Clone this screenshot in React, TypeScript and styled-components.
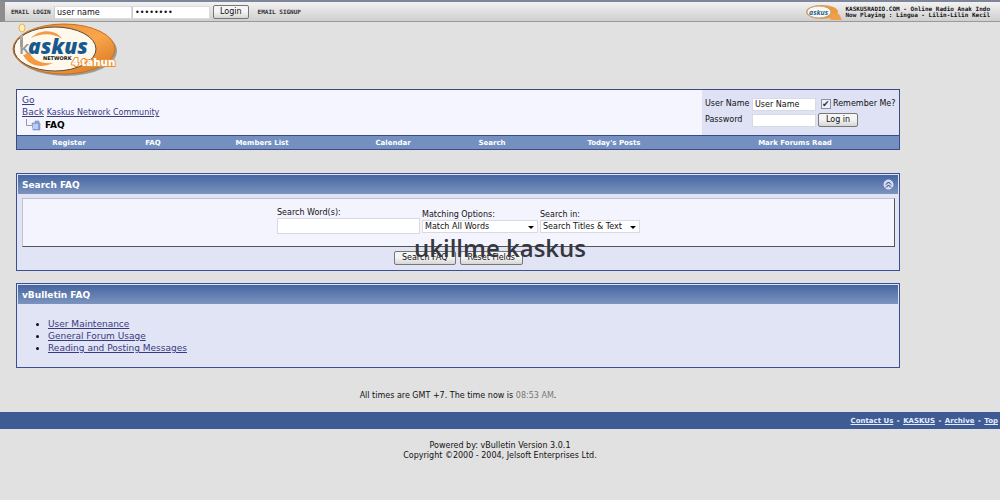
import React from 'react';
import styled, { createGlobalStyle } from 'styled-components';

const Global = createGlobalStyle`
  * { box-sizing: border-box; }
  body {
    margin: 0;
    background: #e1e1e1;
    color: #111;
    font: 8px/10px "DejaVu Sans", Verdana, sans-serif;
  }
  a { color: #3a3a80; }
  input, button, select { font: inherit; color: #111; margin: 0; }
`;

const Page = styled.div`
  position: relative;
`;

const TopBar = styled.header`
  display: flex;
  align-items: center;
  height: 22px;
  padding: 2px 0 1px 6px;
  border-top: 2px solid #7d8799;
  border-bottom: 1px solid #9a9a9a;
  border-left: 5px solid #8d8d8d;
  background: linear-gradient(#f2f2f2, #cfcfcf);
`;

const PixelLabel = styled.label`
  width: 43px;
  font: bold 6px/10px "DejaVu Sans Mono", monospace;
  white-space: nowrap;
  color: #333;
`;

const SignupLink = styled.a`
  margin-left: 9px;
  font: bold 6px/10px "DejaVu Sans Mono", monospace;
  color: #333;
  text-decoration: none;
`;

const TopInput = styled.input`
  width: 78px;
  height: 13px;
  padding: 0 2px;
  border: 1px solid #dcdcdc;
  border-left-color: #ccc;
  background: #fff;
`;

const Button = styled.button`
  height: 14px;
  padding: 0 7px;
  border: 1px solid #777;
  border-radius: 2px;
  background: linear-gradient(#f5f5f5 45%, #d6d6d6);
  line-height: 12px;
  white-space: nowrap;
`;

const TopButton = styled(Button)`
  margin-left: 3px;
  padding: 0 6px;
`;

const Radio = styled.div`
  display: flex;
  align-items: center;
  gap: 4px;
  margin-left: auto;
  padding-right: 10px;
  font: bold 6px/6px "DejaVu Sans Mono", monospace;
  white-space: nowrap;
`;

const LogoRow = styled.div`
  height: 67px;
  padding-left: 10px;
`;

const Main = styled.main`
  padding: 0 10% 0 16px;
`;

const Crumbs = styled.section`
  border: 1px solid #3c4a86;
  background: #f5f5ff;
`;

const CrumbTop = styled.div`
  display: flex;
  justify-content: space-between;
  height: 46px;
  border-bottom: 1px solid #3c4a86;
`;

const CrumbPath = styled.div`
  padding: 4px 0 0 5px;
  font-size: 9px;
  line-height: 12px;
`;

const SmallLink = styled.a`
  font-size: 8px;
`;

const Current = styled.div`
  display: flex;
  align-items: center;
  gap: 4px;
  padding-left: 3px;
  color: #000;
  font-weight: bold;
`;

const LoginForm = styled.form`
  display: grid;
  grid-template-columns: 45px 64px 80px;
  grid-auto-rows: 14px;
  align-content: start;
  align-items: center;
  gap: 2px;
  padding: 7px 1px 0 3px;
  background: #dfe2f4;
  white-space: nowrap;
`;

const Field = styled.input`
  width: 100%;
  height: 13px;
  padding: 0 2px;
  border: 1px solid #d9d9e4;
  background: #fff;
`;

const Remember = styled.label`
  display: flex;
  align-items: center;
  gap: 2px;
  padding-left: 3px;
`;

const Check = styled.input`
  appearance: none;
  width: 10px;
  height: 10px;
  border: 1px solid #8b93a3;
  background: #eef0f6;
  &:checked::after {
    content: "✔";
    display: block;
    font: 9px/8px "DejaVu Sans", sans-serif;
    color: #27304f;
  }
`;

const Nav = styled.nav`
  display: grid;
  grid-template-columns: 104fr 64fr 154fr 108fr 90fr 154fr 208fr;
  height: 13px;
  background: #7390c1;
  text-align: center;
`;

const NavLink = styled.a`
  color: #fff;
  font-weight: bold;
  font-size: 7px;
  line-height: 14px;
  text-decoration: none;
`;

const Panel = styled.section<{ $top: number }>`
  margin-top: ${(p) => p.$top}px;
  padding: 1px;
  border: 1px solid #3d4f93;
  background: #e0e4f5;
`;

const PanelHead = styled.h2`
  display: flex;
  align-items: center;
  justify-content: space-between;
  height: 19px;
  margin: 0;
  padding: 0 4px;
  background: linear-gradient(#4666a2, #7c94be);
  color: #fff;
  font-size: 9px;
  line-height: 12px;
`;

const Collapse = styled.button`
  display: flex;
  padding: 0;
  border: 0;
  background: none;
`;

const SearchForm = styled.form`
  padding: 4px 3px 4px 4px;
`;

const SearchBox = styled.div`
  display: flex;
  align-items: flex-end;
  justify-content: center;
  gap: 2px;
  height: 49px;
  padding: 0 0 12px;
  border: 1px solid #bfc1cc;
  border-right-color: #555;
  border-bottom-color: #555;
  background: #f4f4ff;
`;

const Option = styled.label<{ $width: number }>`
  display: flex;
  flex-direction: column;
  width: ${(p) => p.$width}px;
`;

const SearchInput = styled(Field)`
  height: 16px;
`;

const SelectWrap = styled.span`
  display: flex;
  position: relative;
  padding-bottom: 1px;
  &::after {
    content: "";
    position: absolute;
    right: 4px;
    top: 6px;
    border: 3px solid transparent;
    border-top-color: #000;
    border-bottom: 0;
    pointer-events: none;
  }
`;

const Select = styled.select`
  appearance: none;
  width: 100%;
  height: 13px;
  padding: 0 2px;
  border: 1px solid #d9d9e4;
  border-radius: 0;
  background: #fff;
`;

const Actions = styled.div`
  display: flex;
  justify-content: center;
  gap: 4px;
  padding-top: 4px;
`;

const Topics = styled.ul`
  margin: 0;
  padding: 14px 0 12px 30px;
  font-size: 9px;
  line-height: 12px;
`;

const Times = styled.p`
  margin: 23px 0 11px;
  text-align: center;
  time { color: #777; }
`;

const FooterBar = styled.nav`
  height: 17px;
  padding-right: 1px;
  background: #3e5c93;
  color: #fff;
  font-weight: bold;
  font-size: 7px;
  line-height: 18px;
  text-align: right;
  a {
    margin: 0 1px;
    color: #e4edff;
  }
`;

const Copyright = styled.footer`
  margin-top: 12px;
  text-align: center;
`;

const Watermark = styled.div`
  position: absolute;
  top: 232px;
  left: 50%;
  transform: translateX(-50%);
  color: #35373d;
  font: 600 24px/32px "Open Sans", "Noto Sans", sans-serif;
  white-space: nowrap;
  pointer-events: none;
`;

function Logo() {
  return (
    <svg width="108" height="56" viewBox="0 0 108 56" role="img" aria-label="Kaskus Network, 4 tahun">
      <defs>
        <linearGradient id="ring" x1="0" y1="0" x2="1" y2="1">
          <stop offset="0" stopColor="#e08a35" />
          <stop offset=".55" stopColor="#fba54b" />
          <stop offset="1" stopColor="#cf711b" />
        </linearGradient>
      </defs>
      <ellipse cx="56" cy="29" rx="51" ry="25" fill="#777" opacity=".65" />
      <ellipse cx="54" cy="27" rx="51" ry="25" fill="url(#ring)" stroke="#c7701f" />
      <ellipse cx="45" cy="27" rx="41" ry="22" fill="#fff8ec" stroke="#5a4e3b" />
      <path d="M21 16C31 6 47 8 52 17C43 11 32 11 21 16Z" fill="#f49a43" />
      <path d="M13 33C19 44 31 47 43 41C31 42 23 38 20 31Z" fill="#f49a43" />
      <path d="M10 13h3v12h-3z" fill="#aaa" />
      <ellipse cx="12" cy="6" rx="3" ry="4" fill="#fff1b5" stroke="#f0b04c" />
      <g fontFamily="Open Sans" fontWeight="800">
        <text x="9" y="32" fontSize="18" fontWeight="600" fill="#999">k</text>
        <text x="18" y="32" fontSize="21" fontStyle="italic" fill="#17598f">askus</text>
        <text x="33" y="38" fontFamily="DejaVu Sans" fontSize="5" fill="#111">NETWORK</text>
        <text x="62" y="44" fontSize="11" fill="#fff" stroke="#ed912f" strokeWidth="2" paintOrder="stroke">4 tahun</text>
      </g>
    </svg>
  );
}

function RadioLogo() {
  return (
    <svg width="36" height="17" viewBox="0 0 36 17" aria-hidden="true">
      <ellipse cx="16" cy="8" rx="16" ry="7" fill="#ec9940" />
      <ellipse cx="13" cy="8" rx="12" ry="6" fill="#fff7ea" stroke="#b4a791" />
      <path d="M25 10h8l3 6H24z" fill="#f1a04a" />
      <text x="3" y="11" fontFamily="Open Sans" fontSize="7" fontStyle="italic" fontWeight="bold" fill="#23639a">askus</text>
    </svg>
  );
}

function FolderIcon() {
  return (
    <svg width="16" height="12" viewBox="0 0 16 12" aria-hidden="true">
      <path d="M1.500 0V6.500H7" fill="none" stroke="#999" />
      <path d="M7 4h3V2h4v2h1v7H8z" fill="#8da4da" stroke="#667ab5" strokeWidth=".5" />
      <path d="M8 5h5v5H8z" fill="#bdcbed" />
    </svg>
  );
}

const navItems = ['Register', 'FAQ', 'Members List', 'Calendar', 'Search', "Today's Posts", 'Mark Forums Read'];
const topics = ['User Maintenance', 'General Forum Usage', 'Reading and Posting Messages'];
const footerLinks = ['Contact Us', 'KASKUS', 'Archive', 'Top'];

export default function App() {
  return (
    <Page>
      <Global />
      <TopBar>
        <PixelLabel htmlFor="email">EMAIL LOGIN</PixelLabel>
        <TopInput id="email" defaultValue="user name" />
        <TopInput type="password" aria-label="Email password" defaultValue="password" />
        <TopButton type="button">Login</TopButton>
        <SignupLink href="#signup">EMAIL SIGNUP</SignupLink>
        <Radio>
          <RadioLogo />
          <div>KASKUSRADIO.COM - Online Radio Anak Indo<br />Now Playing : Lingua - Lilin-Lilin Kecil</div>
        </Radio>
      </TopBar>
      <LogoRow><Logo /></LogoRow>
      <Main>
        <Crumbs>
          <CrumbTop>
            <CrumbPath>
              <a href="#back">Go<br />Back</a> <SmallLink href="#home">Kaskus Network Community</SmallLink>
              <Current><FolderIcon />FAQ</Current>
            </CrumbPath>
            <LoginForm>
              <label htmlFor="user">User Name</label>
              <Field id="user" defaultValue="User Name" />
              <Remember><Check type="checkbox" defaultChecked />Remember Me?</Remember>
              <label htmlFor="pass">Password</label>
              <Field id="pass" type="password" />
              <div><Button type="button">Log in</Button></div>
            </LoginForm>
          </CrumbTop>
          <Nav>
            {navItems.map((item) => <NavLink key={item} href="#nav">{item}</NavLink>)}
          </Nav>
        </Crumbs>
        <Panel $top={23}>
          <PanelHead>
            Search FAQ
            <Collapse type="button" aria-label="Collapse">
              <svg width="11" height="11" viewBox="0 0 11 11">
                <circle cx="5.500" cy="5.500" r="4.500" fill="#c9d5ee" stroke="#e6edfb" />
                <path d="M3 5.500L5.500 3L8 5.500M3 8.500L5.500 6L8 8.500" fill="none" stroke="#26386b" />
              </svg>
            </Collapse>
          </PanelHead>
          <SearchForm>
            <SearchBox>
              <Option $width={143}>Search Word(s):<SearchInput /></Option>
              <Option $width={116}>
                Matching Options:
                <SelectWrap><Select><option>Match All Words</option></Select></SelectWrap>
              </Option>
              <Option $width={100}>
                Search in:
                <SelectWrap><Select><option>Search Titles &amp; Text</option></Select></SelectWrap>
              </Option>
            </SearchBox>
            <Actions>
              <Button type="button">Search FAQ</Button>
              <Button type="reset">Reset Fields</Button>
            </Actions>
          </SearchForm>
        </Panel>
        <Panel $top={12}>
          <PanelHead>vBulletin FAQ</PanelHead>
          <Topics>
            {topics.map((topic) => <li key={topic}><a href="#topic">{topic}</a></li>)}
          </Topics>
        </Panel>
        <Times>All times are GMT +7. The time now is <time>08:53 AM</time>.</Times>
      </Main>
      <FooterBar>
        {footerLinks.map((link, i) => (
          <React.Fragment key={link}>{i > 0 && ' - '}<a href="#footer">{link}</a></React.Fragment>
        ))}
      </FooterBar>
      <Copyright>Powered by: vBulletin Version 3.0.1<br />Copyright ©2000 - 2004, Jelsoft Enterprises Ltd.</Copyright>
      <Watermark>ukillme kaskus</Watermark>
    </Page>
  );
}
